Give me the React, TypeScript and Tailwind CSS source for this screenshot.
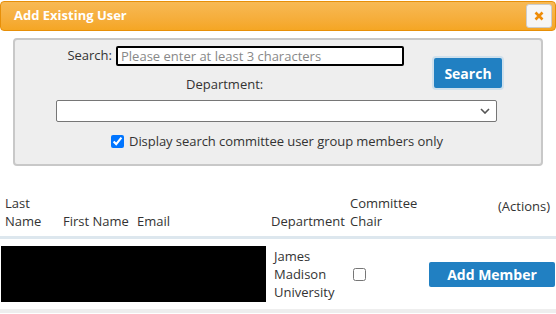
import React from 'react';

const App: React.FC = () => {
  return (
    <div className="w-[556px] h-[314px] overflow-hidden bg-white text-[13px] text-[#333] font-['Open_Sans',sans-serif]">
      {/* title bar */}
      <div className="mt-px h-[30px] flex items-center justify-between pl-[13px] pr-[3px] rounded-[4px] border border-[#e78f08] bg-gradient-to-b from-[#f7b954] to-[#f5a623]">
        <span className="text-white font-bold text-[13px]">Add Existing User</span>
        <button className="w-[26px] h-[24px] flex items-center justify-center rounded-[3px] border border-[#cccccc] bg-[#f6f6f6] text-[#ef8c08]">
          <svg width="10" height="10" viewBox="0 0 10 10">
            <path d="M1.5 1.5 L8.5 8.5 M8.5 1.5 L1.5 8.5" stroke="#ef8c08" strokeWidth="2.6" />
          </svg>
        </button>
      </div>

      {/* search panel */}
      <div className="mx-[13px] mt-[7px] h-[128px] rounded-[4px] border-2 border-[#c8c8c8] bg-[#eeeeee] flex">
        <div className="w-[404px] flex flex-col">
          <div className="flex items-center mt-[6px] h-[20px]">
            <span className="w-[101px] text-right pr-[4px]">Search:</span>
            <input
              className="w-[288px] h-[20px] px-[3px] rounded-[2px] border-2 border-black bg-white text-[13px] placeholder:text-[#888] outline-none"
              placeholder="Please enter at least 3 characters"
            />
          </div>
          <div className="mt-[9px] pl-[171px] leading-[18px]">Department:</div>
          <div className="mt-[7px] ml-[41px] w-[441px] h-[22px] rounded-[2px] border border-[#767676] bg-white flex items-center justify-end pr-[6px]">
            <svg width="10" height="6" viewBox="0 0 10 6">
              <path d="M1 1 L5 5 L9 1" stroke="#555" strokeWidth="1.6" fill="none" />
            </svg>
          </div>
          <label className="mt-[10px] ml-[96px] flex items-center gap-[5px] whitespace-nowrap leading-[18px]">
            <input type="checkbox" defaultChecked className="w-[13px] h-[13px] m-0 accent-[#0075ff]" />
            <span className="tracking-[-0.05px]">Display search committee user group members only</span>
          </label>
        </div>
        <div className="pt-[16px] pl-[13px]">
          <button className="w-[72px] h-[34px] rounded-[4px] border-2 border-[#cfe0ec] bg-[#2180c2] text-white font-bold text-[14px]">
            Search
          </button>
        </div>
      </div>

      {/* table */}
      <div className="mt-[31px]">
        <div className="flex items-end h-[42px] pb-[6px] border-b-[3px] border-[#dde7ee]">
          <div className="w-[58px] pl-[5px] leading-[18px]">Last<br />Name</div>
          <div className="w-[74px] pl-[5px] leading-[18px]">First Name</div>
          <div className="w-[134px] pl-[5px] leading-[18px]">Email</div>
          <div className="w-[79px] pl-[5px] leading-[18px]">Department</div>
          <div className="w-[80px] pl-[5px] leading-[18px]">Committee<br />Chair</div>
          <div className="flex-1 self-start text-right pr-[6px] leading-[18px]">(Actions)</div>
        </div>
        <div className="flex items-center h-[74px] border-b-[4px] border-[#eeeeee]">
          <div className="ml-px w-[265px] h-[56px] bg-black" />
          <div className="w-[79px] pl-[8px] leading-[18px]">James<br />Madison<br />University</div>
          <div className="w-[80px] pl-[8px] flex">
            <input type="checkbox" className="w-[13px] h-[13px] m-0" />
          </div>
          <div className="flex-1 flex justify-end pr-px">
            <button className="w-[126px] h-[25px] rounded-[2px] bg-[#2180c2] text-white font-bold text-[14px]">
              Add Member
            </button>
          </div>
        </div>
      </div>
    </div>
  );
};

export default App;
